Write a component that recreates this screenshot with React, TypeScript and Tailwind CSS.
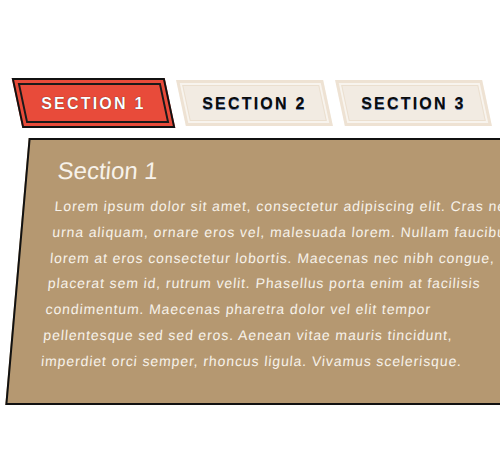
const tabs = ["SECTION 1", "SECTION 2", "SECTION 3"];

const lines = [
  "Lorem ipsum dolor sit amet, consectetur adipiscing elit. Cras nec",
  "urna aliquam, ornare eros vel, malesuada lorem. Nullam faucibus",
  "lorem at eros consectetur lobortis. Maecenas nec nibh congue,",
  "placerat sem id, rutrum velit. Phasellus porta enim at facilisis",
  "condimentum. Maecenas pharetra dolor vel elit tempor",
  "pellentesque sed sed eros. Aenean vitae mauris tincidunt,",
  "imperdiet orci semper, rhoncus ligula. Vivamus scelerisque.",
];

function Tab({ label, active }: { label: string; active: boolean }) {
  if (active) {
    return (
      <div className="skew-x-12 w-[153px] h-[50px] border-2 border-[#111] bg-[#e84b3a] p-[3px]">
        <div className="h-full border-2 border-[#1a1a1a] flex items-center justify-center pt-[2px]">
          <span className="-skew-x-12 text-[16px] font-bold tracking-[2.2px] text-white [text-shadow:0_0_1px_#3a1a10]">
            {label}
          </span>
        </div>
      </div>
    );
  }
  return (
    <div className="skew-x-12 w-[147px] h-[46px] border-[3px] border-[#eee2d3] bg-[#f8f4ee] p-[2px]">
      <div className="h-full border border-[#ebdfcf] bg-[#f2ebe2] flex items-center justify-center pt-[2px]">
        <span className="-skew-x-12 text-[16px] font-bold tracking-[2.2px] text-[#0b0b0b] [text-shadow:0_1px_0_#6b87b8]">
          {label}
        </span>
      </div>
    </div>
  );
}

export default function App() {
  return (
    <div className="w-[500px] h-[472px] overflow-hidden bg-white font-['Liberation_Sans',Arial,sans-serif]">
      <div className="pt-[78px] pl-[17px]">
        <div className="flex items-center gap-[11px]">
          {tabs.map((t, i) => (
            <div key={t} className={i === 2 ? "ml-px" : ""}>
              <Tab label={t} active={i === 0} />
            </div>
          ))}
        </div>
        <div className="mt-[10px] -skew-x-5 w-[560px] h-[267px] border-2 border-[#111] bg-[#b59871] pl-[30px] pt-[17px]">
          <h2 className="text-[24px] leading-[28px] text-[#f7f2ea]">Section 1</h2>
          <div className="mt-[9px] text-[14px] leading-[25.8px] tracking-[0.9px] text-[#f7f2ea]">
            {lines.map((l) => (
              <p key={l} className="whitespace-nowrap">
                {l}
              </p>
            ))}
          </div>
        </div>
      </div>
    </div>
  );
}
